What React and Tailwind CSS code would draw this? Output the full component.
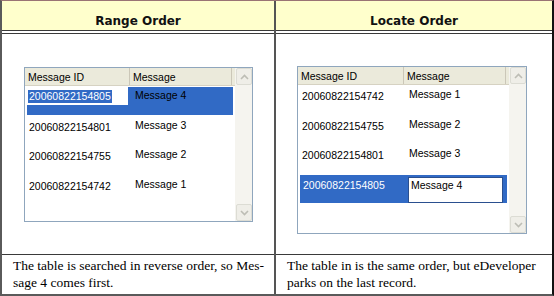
const leftRows = [
  { id: "20060822154805", msg: "Message 4" },
  { id: "20060822154801", msg: "Message 3" },
  { id: "20060822154755", msg: "Message 2" },
  { id: "20060822154742", msg: "Message 1" },
];

const rightRows = [
  { id: "20060822154742", msg: "Message 1" },
  { id: "20060822154755", msg: "Message 2" },
  { id: "20060822154801", msg: "Message 3" },
  { id: "20060822154805", msg: "Message 4" },
];

function ScrollButton({ up }) {
  return (
    <div className="h-[17px] w-[16px] rounded-[2px] border border-[#dcdcd4] bg-[#efeee8] flex items-center justify-center">
      <svg width="9" height="6" viewBox="0 0 9 6">
        <path
          d={up ? "M1 5 L4.5 1.5 L8 5" : "M1 1 L4.5 4.5 L8 1"}
          fill="none"
          stroke="#bdbdb5"
          strokeWidth="1.6"
        />
      </svg>
    </div>
  );
}

function ListBox({ width, height, colA, rows, selected, editCol }) {
  return (
    <div
      className="flex border border-[#8fa6bd] bg-white text-[10.5px] text-black"
      style={{ width, height, fontFamily: '"Liberation Sans", Arial, sans-serif' }}
    >
      <div className="flex-1 flex flex-col">
        {/* header */}
        <div className="h-[18px] flex bg-[#ebeadb] border-b border-[#d6d2c2] leading-[18px]">
          <div className="border-r border-[#cbc7b8] pl-[3px]" style={{ width: colA }}>
            Message ID
          </div>
          <div className="flex-1 border-r border-[#cbc7b8] pl-[3px] mr-[3px]">Message</div>
        </div>
        {/* rows */}
        <div className="pt-[1px]">
          {rows.map((r, i) => {
            const sel = i === selected;
            return (
              <div key={r.id} className="h-[29.5px] flex mx-[2px]">
                <div className={`flex w-full h-[28px] ${sel ? "bg-[#316ac5]" : ""}`}>
                  {sel && editCol === "id" ? (
                    <>
                      <div className="w-[107px]">
                        <div className="w-[101px] h-[18px] bg-white pl-[1px] pt-[2px]">
                          <span className="bg-[#316ac5] text-white leading-[13px] inline-block px-[1px]">
                            {r.id}
                          </span>
                        </div>
                      </div>
                      <div className="flex-1 pt-[2px] pl-[1px] leading-[12px]">{r.msg}</div>
                    </>
                  ) : sel && editCol === "msg" ? (
                    <>
                      <div className="w-[108px] pl-[3px] pt-[4px] leading-[12px] text-white">
                        {r.id}
                      </div>
                      <div className="pt-[2px]">
                        <div className="w-[95px] h-[26px] bg-white border border-[#2a4f8f] pl-[2px] pt-[1px] leading-[12px]">
                          {r.msg}
                        </div>
                      </div>
                    </>
                  ) : (
                    <>
                      <div
                        className="pl-[2px] pt-[4px] leading-[12px]"
                        style={{ width: colA + 2 }}
                      >
                        {r.id}
                      </div>
                      <div className="flex-1 pt-[2px] pl-[1px] leading-[12px]">{r.msg}</div>
                    </>
                  )}
                </div>
              </div>
            );
          })}
        </div>
      </div>
      {/* scrollbar */}
      <div className="w-[17px] flex flex-col justify-between items-end bg-[#f5f4ef]">
        <ScrollButton up />
        <ScrollButton />
      </div>
    </div>
  );
}

function Column({ title, list, lines, last }) {
  return (
    <div
      className={`flex flex-col h-full ${
        last ? "flex-1" : "w-[274px] border-r-2 border-r-[#555]"
      }`}
    >
      <div
        className="h-[30px] bg-[#ffffcc] border-b border-b-[#3a3a3a] flex justify-center pt-[13px] text-[12px] font-bold text-[#111] leading-[14px]"
        style={{ fontFamily: '"DejaVu Sans", Verdana, sans-serif' }}
      >
        {title}
      </div>
      <div className="h-[2px]" />
      <div className="h-[222px] border-t border-b border-[#3a3a3a]">{list}</div>
      <div
        className="flex-1 pl-[11px] pt-[2px] text-[13.5px] leading-[17px] text-black"
        style={{ fontFamily: '"Liberation Serif", "Times New Roman", serif' }}
      >
        {lines[0]}
        <br />
        {lines[1]}
      </div>
    </div>
  );
}

export default function App() {
  return (
    <div className="w-[554px] h-[296px] bg-white">
      <div className="flex h-full border-t border-t-[#9a7474] border-l-2 border-l-[#5a5a5a] border-r-2 border-r-[#111] border-b-2 border-b-[#5a5a5a]">
        <Column
          title="Range Order"
          lines={["The table is searched in reverse order, so Mes-", "sage 4 comes first."]}
          list={
            <div className="pl-[22px] pt-[33px]">
              <ListBox width={229} height={155} colA={105} rows={leftRows} selected={0} editCol="id" />
            </div>
          }
        />
        <Column
          last
          title="Locate Order"
          lines={["The table in is the same order, but eDeveloper", "parks on the last record."]}
          list={
            <div className="pl-[21px] pt-[32px]">
              <ListBox width={230} height={168} colA={106} rows={rightRows} selected={3} editCol="msg" />
            </div>
          }
        />
      </div>
    </div>
  );
}
